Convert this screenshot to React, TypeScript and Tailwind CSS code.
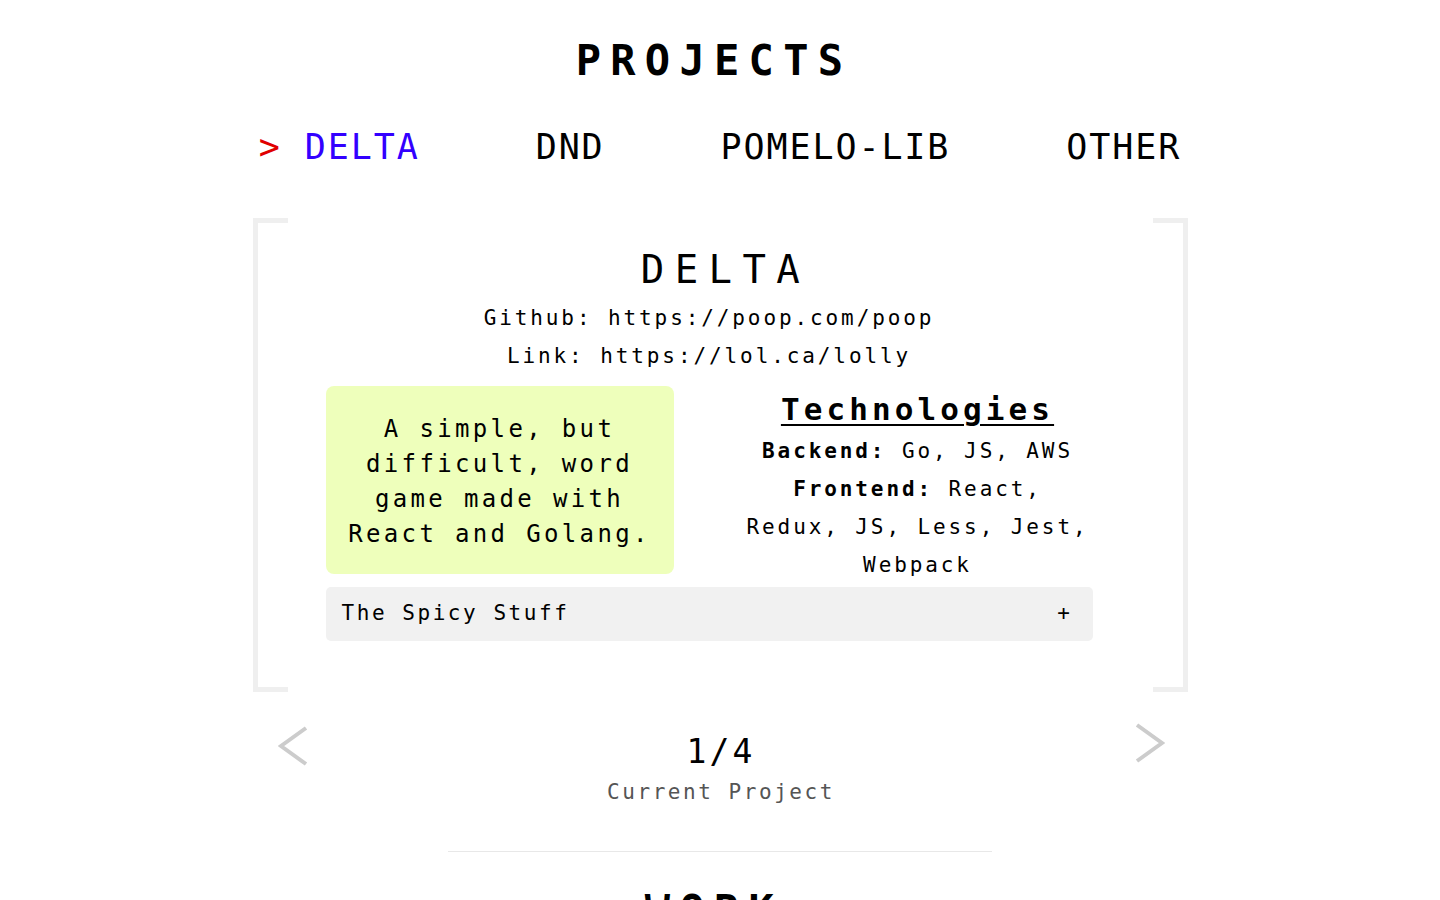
import React, { useState } from 'react';

const mono = "font-['DejaVu_Sans_Mono','Liberation_Mono',monospace]";

const tabs = ['DELTA', 'DND', 'POMELO-LIB', 'OTHER'];

const Chevron = ({ dir }: { dir: 'left' | 'right' }) => (
    <svg width="30" height="42" viewBox="0 0 30 42" fill="none">
        <polyline
            points={dir === 'left' ? '28,2 3,20 28,38' : '2,2 27,20 2,38'}
            stroke="#cccccc"
            strokeWidth="4"
            strokeLinejoin="miter"
        />
    </svg>
);

const SectionTitle = ({ children }: { children: React.ReactNode }) => (
    <h1 className="text-[42px] leading-[60px] font-bold tracking-[9.3px] text-black text-center pr-[12px]">
        {children}
    </h1>
);

export default function App() {
    const [active] = useState(0);
    const [open, setOpen] = useState(false);

    return (
        <div className={`${mono} bg-white min-h-[900px] w-full overflow-hidden text-black`}>
            <div className="pt-[31px]">
                <SectionTitle>PROJECTS</SectionTitle>
            </div>

            {/* tabs */}
            <div className="mt-[33px] flex justify-center gap-[116px] text-[35px] leading-[46px] tracking-[1.9px]">
                {tabs.map((t, i) => (
                    <div key={t} className={i === active ? 'text-[#3300ff]' : 'text-black'}>
                        {i === active && <span className="text-[#e00000]">{'> '}</span>}
                        {t}
                    </div>
                ))}
            </div>

            {/* project card */}
            <div className="relative mt-[48px] mx-auto w-[935px] pt-[27px] pb-[51px]">
                <div className="absolute left-0 top-0 h-full w-[35px] border-[5px] border-r-0 border-[#efefef]"></div>
                <div className="absolute right-0 top-0 h-full w-[35px] border-[5px] border-l-0 border-[#efefef]"></div>

                <div className="text-center text-[39px] leading-[50px] tracking-[10.4px] pl-[11px]">DELTA</div>

                <div className="ml-[73px] w-[767px]">
                    <div className="mt-[4px] text-center text-[21px] leading-[38px] tracking-[2.9px]">
                        <div>Github: https://poop.com/poop</div>
                        <div>Link: https://lol.ca/lolly</div>
                    </div>

                    <div className="mt-[11px] flex items-start">
                        <div className="w-[348px] h-[188px] rounded-[8px] bg-[#eeffbb] flex items-center justify-center px-[20px] pt-[3px] text-center text-[24px] leading-[35px] tracking-[3.35px]">
                            A simple, but difficult, word game made with React and Golang.
                        </div>
                        <div className="ml-[69px] w-[350px] text-center">
                            <div className="text-[31px] leading-[46px] font-bold tracking-[4.1px] underline decoration-2 underline-offset-[4px]">
                                Technologies
                            </div>
                            <div className="text-[21px] leading-[38px] tracking-[2.9px]">
                                <div>
                                    <span className="font-bold">Backend:</span> Go, JS, AWS
                                </div>
                                <div>
                                    <span className="font-bold">Frontend:</span> React, Redux, JS, Less, Jest, Webpack
                                </div>
                            </div>
                        </div>
                    </div>

                    <button
                        onClick={() => setOpen(!open)}
                        className="mt-[3px] w-full h-[54px] rounded-[5px] bg-[#f1f1f1] flex items-center justify-between pl-[16px] pr-[20px] text-[21px] tracking-[2.55px] text-black"
                    >
                        <span>The Spicy Stuff</span>
                        <span>{open ? '-' : '+'}</span>
                    </button>
                </div>
            </div>

            {/* pager */}
            <div className="mx-auto w-[935px] mt-[31px] flex justify-between items-start pl-[25px] pr-[23px]">
                <div className="mt-[3px]">
                    <Chevron dir="left" />
                </div>
                <div className="mt-[7px] text-center">
                    <div className="text-[33px] leading-[43px] tracking-[3.1px]">1/4</div>
                    <div className="text-[21px] leading-[38px] tracking-[2.55px] text-[#555555]">Current Project</div>
                </div>
                <div>
                    <Chevron dir="right" />
                </div>
            </div>

            <div className="mx-auto mt-[40px] w-[544px] h-px bg-[#e8e8e8]"></div>

            <div className="mt-[29px]">
                <SectionTitle>WORK</SectionTitle>
            </div>
        </div>
    );
}
